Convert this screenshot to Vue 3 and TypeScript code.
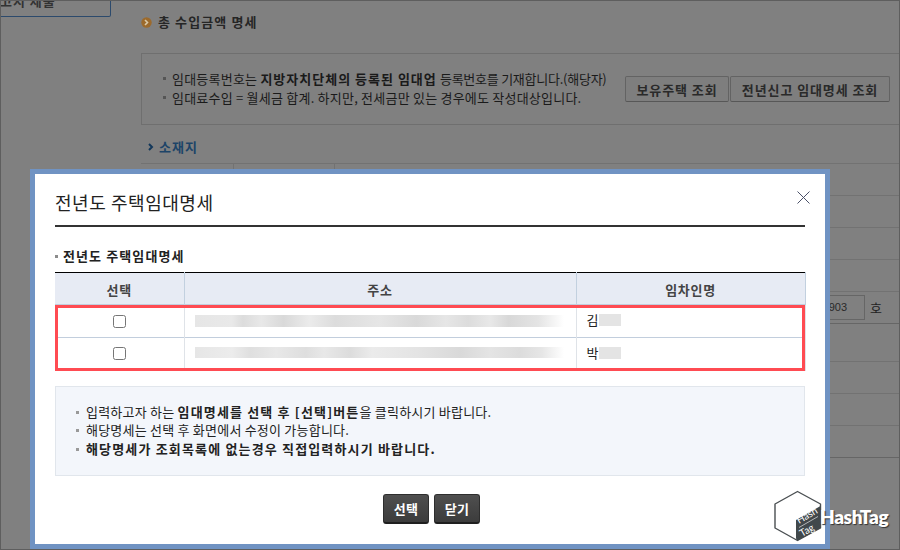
<script setup lang="ts">
interface Row { id: number; surname: string; blur: string }
const rows: Row[] = [
  { id: 1, surname: '김', blur: 'blur-a' },
  { id: 2, surname: '박', blur: 'blur-b' },
]
</script>

<template>
  <div class="page">
    <aside class="side">
      <div class="side-btn"><span>고지 제출</span></div>
    </aside>
    <main class="main">
      <h2 class="sec-title">
        <svg class="sec-icon" width="11" height="11" viewBox="0 0 11 11">
          <circle cx="5.5" cy="5.5" r="5.2" fill="#9c6a2c" />
          <path d="M4 3 L6.5 5.5 L4 8" fill="none" stroke="#d9c9a8" stroke-width="1.6" />
        </svg>
        총 수입금액 명세
      </h2>
      <section class="guide">
        <ul class="guide-list">
          <li>임대등록번호는 <b>지방자치단체의 등록된 임대업</b> <span class="tight">등록번호를 기재합니다.(해당자)</span></li>
          <li>임대료수입 = 월세금 합계. 하지만, 전세금만 있는 경우에도 작성대상입니다.</li>
        </ul>
        <div class="guide-btns">
          <button class="bg-btn b1" type="button">보유주택 조회</button>
          <button class="bg-btn b2" type="button">전년신고 임대명세 조회</button>
        </div>
      </section>
      <h3 class="loc-title">
        <svg width="6" height="8" viewBox="0 0 6 8"><path d="M1 1 L4 4 L1 7" fill="none" stroke="#12375a" stroke-width="2" /></svg>
        소재지
      </h3>
      <div class="bg-table">
        <div class="bg-row"><i class="c1"></i><i class="c2"></i></div>
        <div class="bg-row"></div>
        <div class="bg-row"></div>
        <div class="bg-row"></div>
        <div class="bg-row strong input-row">
          <span class="addr-input">903</span><span class="ho">호</span>
        </div>
        <div class="bg-row tall"></div>
        <div class="bg-row"></div>
        <div class="bg-row"></div>
        <div class="bg-row strong"></div>
      </div>
    </main>

    <div class="modal">
      <header class="modal-head">
        <h1>전년도 주택임대명세</h1>
        <svg class="close" width="13" height="13" viewBox="0 0 13 13">
          <path d="M0.5 0.5 L12.5 12.5 M12.5 0.5 L0.5 12.5" stroke="#4a5068" stroke-width="1" fill="none" />
        </svg>
      </header>
      <h4 class="sub">전년도 주택임대명세</h4>
      <div class="table-wrap">
        <table class="tbl">
          <colgroup>
            <col class="w1" /><col class="w2" /><col class="w3" />
          </colgroup>
          <thead>
            <tr><th>선택</th><th>주소</th><th>임차인명</th></tr>
          </thead>
          <tbody>
            <tr v-for="r in rows" :key="r.id">
              <td class="center"><input type="checkbox" class="chk" :class="r.blur" /></td>
              <td><div class="blur" :class="r.blur"></div></td>
              <td class="name"><span class="name-wrap" :class="r.blur">{{ r.surname }}<span class="blur-name"></span></span></td>
            </tr>
          </tbody>
        </table>
        <div class="highlight"></div>
      </div>
      <div class="notice">
        <p>입력하고자 하는 <b>임대명세를 선택 후 [선택]버튼</b>을 클릭하시기 바랍니다.</p>
        <p>해당명세는 선택 후 화면에서 수정이 가능합니다.</p>
        <p><b>해당명세가 조회목록에 없는경우 직접입력하시기 바랍니다.</b></p>
      </div>
      <div class="actions">
        <button type="button" class="dark-btn">선택</button>
        <button type="button" class="dark-btn">닫기</button>
      </div>
    </div>

    <div class="logo">
      <svg width="50" height="52" viewBox="0 0 50 52">
        <path d="M24.5 1.5 L47.5 14 L47.5 38 L24.5 50.5 L2 38 L2 14 Z" fill="#fff" stroke="#4a4f52" stroke-width="1.4" stroke-linejoin="round" />
        <path d="M23 30 L47.5 16 L47.5 38 L25 50.5 Q23 50.5 23 48 Z" fill="#41484b" />
        <g fill="#fff" font-family="Lato, sans-serif" font-size="10" font-weight="400">
          <text transform="translate(26 34) rotate(-30)">Hash</text>
          <text transform="translate(29 47) rotate(-30)">Tag</text>
        </g>
        <path d="M26 37.5 L45 26.5" stroke="#fff" stroke-width="0.6" />
      </svg>
      <span class="logo-text">HashTag</span>
    </div>
  </div>
</template>

<style>
html, body { margin: 0; padding: 0; }
</style>

<style scoped>
.page {
  position: relative;
  width: 900px;
  height: 550px;
  box-sizing: border-box;
  overflow: hidden;
  display: flex;
  background: #808080;
  border: 1px solid #5e5e5e;
  font-family: "Noto Sans CJK KR", "Liberation Sans", sans-serif;
  font-size: 13px;
  color: #1c1c1c;
}
.side { width: 140px; flex: none; }
.side-btn {
  width: 110px;
  height: 17px;
  box-sizing: border-box;
  margin-top: -1px;
  border: 1px solid #2c4a6c;
  border-left: 0;
  border-radius: 0 0 2px 0;
  overflow: hidden;
  font-weight: 700;
  letter-spacing: 1px;
  color: #333;
  font-size: 13px;
  line-height: 13px;
}
.side-btn span { display: block; margin: -7px 0 0 -1px; }
.main { flex: 1; min-width: 0; display: flex; flex-direction: column; }
.sec-title {
  margin: 13px 0 0;
  height: 16px;
  line-height: 16px;
  font-size: 13px;
  font-weight: 700;
  letter-spacing: 1.1px;
  color: #262626;
  display: flex;
  align-items: center;
  gap: 6px;
}
.guide {
  margin-top: 23px;
  height: 72px;
  box-sizing: border-box;
  border: 1px solid #6f6f6f;
  border-right: 0;
  display: flex;
  align-items: center;
  padding: 0 9px 0 21px;
  justify-content: space-between;
}
.guide-list { list-style: none; margin: -2px 0 0; padding: 0; }
.guide-list li {
  position: relative;
  padding-left: 9px;
  height: 19px;
  line-height: 19px;
  letter-spacing: 0.22px;
  white-space: nowrap;
  color: #1a1a1a;
}
.guide-list b { letter-spacing: 1px; }
.tight { letter-spacing: -0.25px; }
.guide-list li::before {
  content: "";
  position: absolute;
  left: 0;
  top: 8px;
  width: 3px;
  height: 3px;
  background: #555;
}
.guide-btns { display: flex; gap: 1px; }
.bg-btn {
  height: 26px;
  padding: 0;
  border: 1px solid #636363;
  border-bottom-color: #575757;
  border-radius: 2px;
  background: #7e7e7e;
  font-family: inherit;
  font-size: 13px;
  font-weight: 700;
  letter-spacing: 0.9px;
  color: #2a2a2a;
}
.b1 { width: 104px; }
.b2 { width: 160px; }
.loc-title {
  margin: 12px 0 0;
  height: 20px;
  line-height: 20px;
  font-size: 13px;
  font-weight: 700;
  color: #1d4468;
  display: flex;
  align-items: center;
  gap: 5px;
  padding-left: 7px;
  letter-spacing: 1px;
}
.bg-table { margin-top: 6px; border-top: 1px solid #727272; }
.bg-row {
  position: relative;
  height: 31px;
  border-bottom: 1px solid #727272;
}
.bg-row.strong { border-bottom-color: #666; }
.bg-row.tall { height: 37px; }
.bg-row i { position: absolute; top: 0; bottom: 0; width: 1px; background: #727272; }
.bg-row .c1 { left: 92px; }
.bg-row .c2 { left: 193px; }
.input-row { display: flex; justify-content: flex-end; align-items: center; padding-right: 15px; gap: 5px; }
.addr-input {
  box-sizing: border-box;
  width: 60px;
  height: 25px;
  border: 1px solid #666;
  line-height: 23px;
  text-align: right;
  padding-right: 17px;
  font-family: "Liberation Sans", sans-serif;
  font-size: 11px;
  color: #2a2a2a;
}
.ho { width: 14px; color: #222; }

.modal {
  position: absolute;
  left: 29px;
  top: 168px;
  width: 800px;
  height: 380px;
  box-sizing: border-box;
  background: #fff;
  border: 5px solid #7093c3;
  padding: 0 20px;
  display: flex;
  flex-direction: column;
}
.modal-head {
  position: relative;
  height: 53px;
  box-sizing: border-box;
  border-bottom: 2px solid #333;
  display: flex;
  align-items: center;
}
.modal-head h1 {
  margin: 5px 0 0;
  font-size: 18px;
  font-weight: 400;
  letter-spacing: 0.55px;
  color: #222;
}
.close { position: absolute; right: -5px; top: 17px; }
.sub {
  position: relative;
  margin: 20px 0 0;
  height: 18px;
  line-height: 18px;
  padding-left: 8px;
  font-size: 13px;
  font-weight: 700;
  letter-spacing: 1.1px;
  color: #222;
}
.sub::before {
  content: "";
  position: absolute;
  left: 0;
  top: 8px;
  width: 3px;
  height: 3px;
  background: #8c8c8c;
}
.table-wrap { position: relative; margin-top: 7px; }
.tbl { width: 750px; border-collapse: collapse; table-layout: fixed; border-top: 1px solid #000; }
.w1 { width: 129px; }
.w2 { width: 392px; }
.w3 { width: 229px; }
.tbl th {
  height: 32px;
  padding: 2px 0 0;
  box-sizing: border-box;
  background: #e7ebf4;
  border-right: 1px solid #c2d0df;
  font-size: 13px;
  font-weight: 700;
  letter-spacing: 0.7px;
  color: #444;
}
.tbl td {
  height: 33px;
  padding: 0;
  box-sizing: border-box;
  border-right: 1px solid #dfe3e8;
  border-top: 1px solid #c2cedd;
}
.center { text-align: center; }
.chk { width: 13px; height: 13px; display: block; margin: 0 auto; }
.chk.blur-b { margin-top: -2px; }
.blur {
  margin: -1px 0 0 10px;
  width: 369px;
  height: 12px;
  background: linear-gradient(90deg, #e6e6e6 0%, #e9e9e9 10%, #dcdcdc 13%, #e8e8e8 18%, #d9d9d9 24%, #ebebeb 31%, #dcdcdc 38%, #e6e6e6 50%, #d9d9d9 60%, #e6e6e6 68%, #dcdcdc 74%, #e8e8e8 80%, #d8d8d8 85%, #e4e4e4 93%, #ffffff 100%);
}
.blur.blur-b {
  height: 11px;
  margin-top: -3px;
  background: linear-gradient(90deg, #e6e6e6 0%, #ececec 10%, #dfdfdf 15%, #e8e8e8 22%, #dedede 30%, #e8e8e8 35%, #dcdcdc 42%, #ebebeb 48%, #e4e4e4 60%, #d9d9d9 72%, #e4e4e4 80%, #dcdcdc 88%, #e6e6e6 94%, #ffffff 100%);
}
.name { padding-left: 10px !important; color: #222; white-space: nowrap; }
.name-wrap { display: flex; align-items: center; height: 12px; line-height: 12px; margin-top: -2px; }
.name-wrap.blur-b { margin-top: -3px; }
.blur-name {
  display: inline-block;
  width: 22px;
  height: 12px;
  margin-left: 1px;
  background: #e4e4e4;
}
.highlight {
  position: absolute;
  left: 0;
  right: 0;
  top: 33px;
  height: 66px;
  box-sizing: border-box;
  border: 3px solid #ff4b52;
  pointer-events: none;
}
.notice {
  margin-top: 15px;
  height: 90px;
  box-sizing: border-box;
  background: #f3f6fb;
  border: 1px solid #e1e6ec;
  padding: 16px 20px 0;
}
.notice p {
  position: relative;
  margin: 0;
  height: 18.5px;
  line-height: 18.5px;
  padding-left: 10px;
  letter-spacing: 0.22px;
  color: #222;
  white-space: nowrap;
}
.notice p::before {
  content: "";
  position: absolute;
  left: 0;
  top: 8px;
  width: 3px;
  height: 3px;
  background: #999;
}
.notice b { letter-spacing: 1.16px; }
.actions {
  margin-top: 18px;
  display: flex;
  justify-content: center;
  gap: 5px;
  padding-left: 3px;
}
.dark-btn {
  width: 46px;
  height: 30px;
  padding: 0;
  border: 1px solid #2e2e2e;
  border-bottom: 2px solid #1f1f1f;
  border-radius: 3px;
  background: linear-gradient(#4f4f4f, #3c3c3c);
  color: #fff;
  font-family: inherit;
  font-size: 13px;
  font-weight: 700;
  letter-spacing: 0.4px;
}
.logo {
  position: absolute;
  left: 772px;
  top: 489px;
  display: flex;
  align-items: center;
}
.logo-text {
  margin: 0 0 0 -3px;
  font-family: Lato, "Liberation Sans", sans-serif;
  font-weight: 800;
  font-size: 19px;
  letter-spacing: -0.4px;
  color: #fff;
  text-shadow: 1px 1px 1px #333;
}
</style>
